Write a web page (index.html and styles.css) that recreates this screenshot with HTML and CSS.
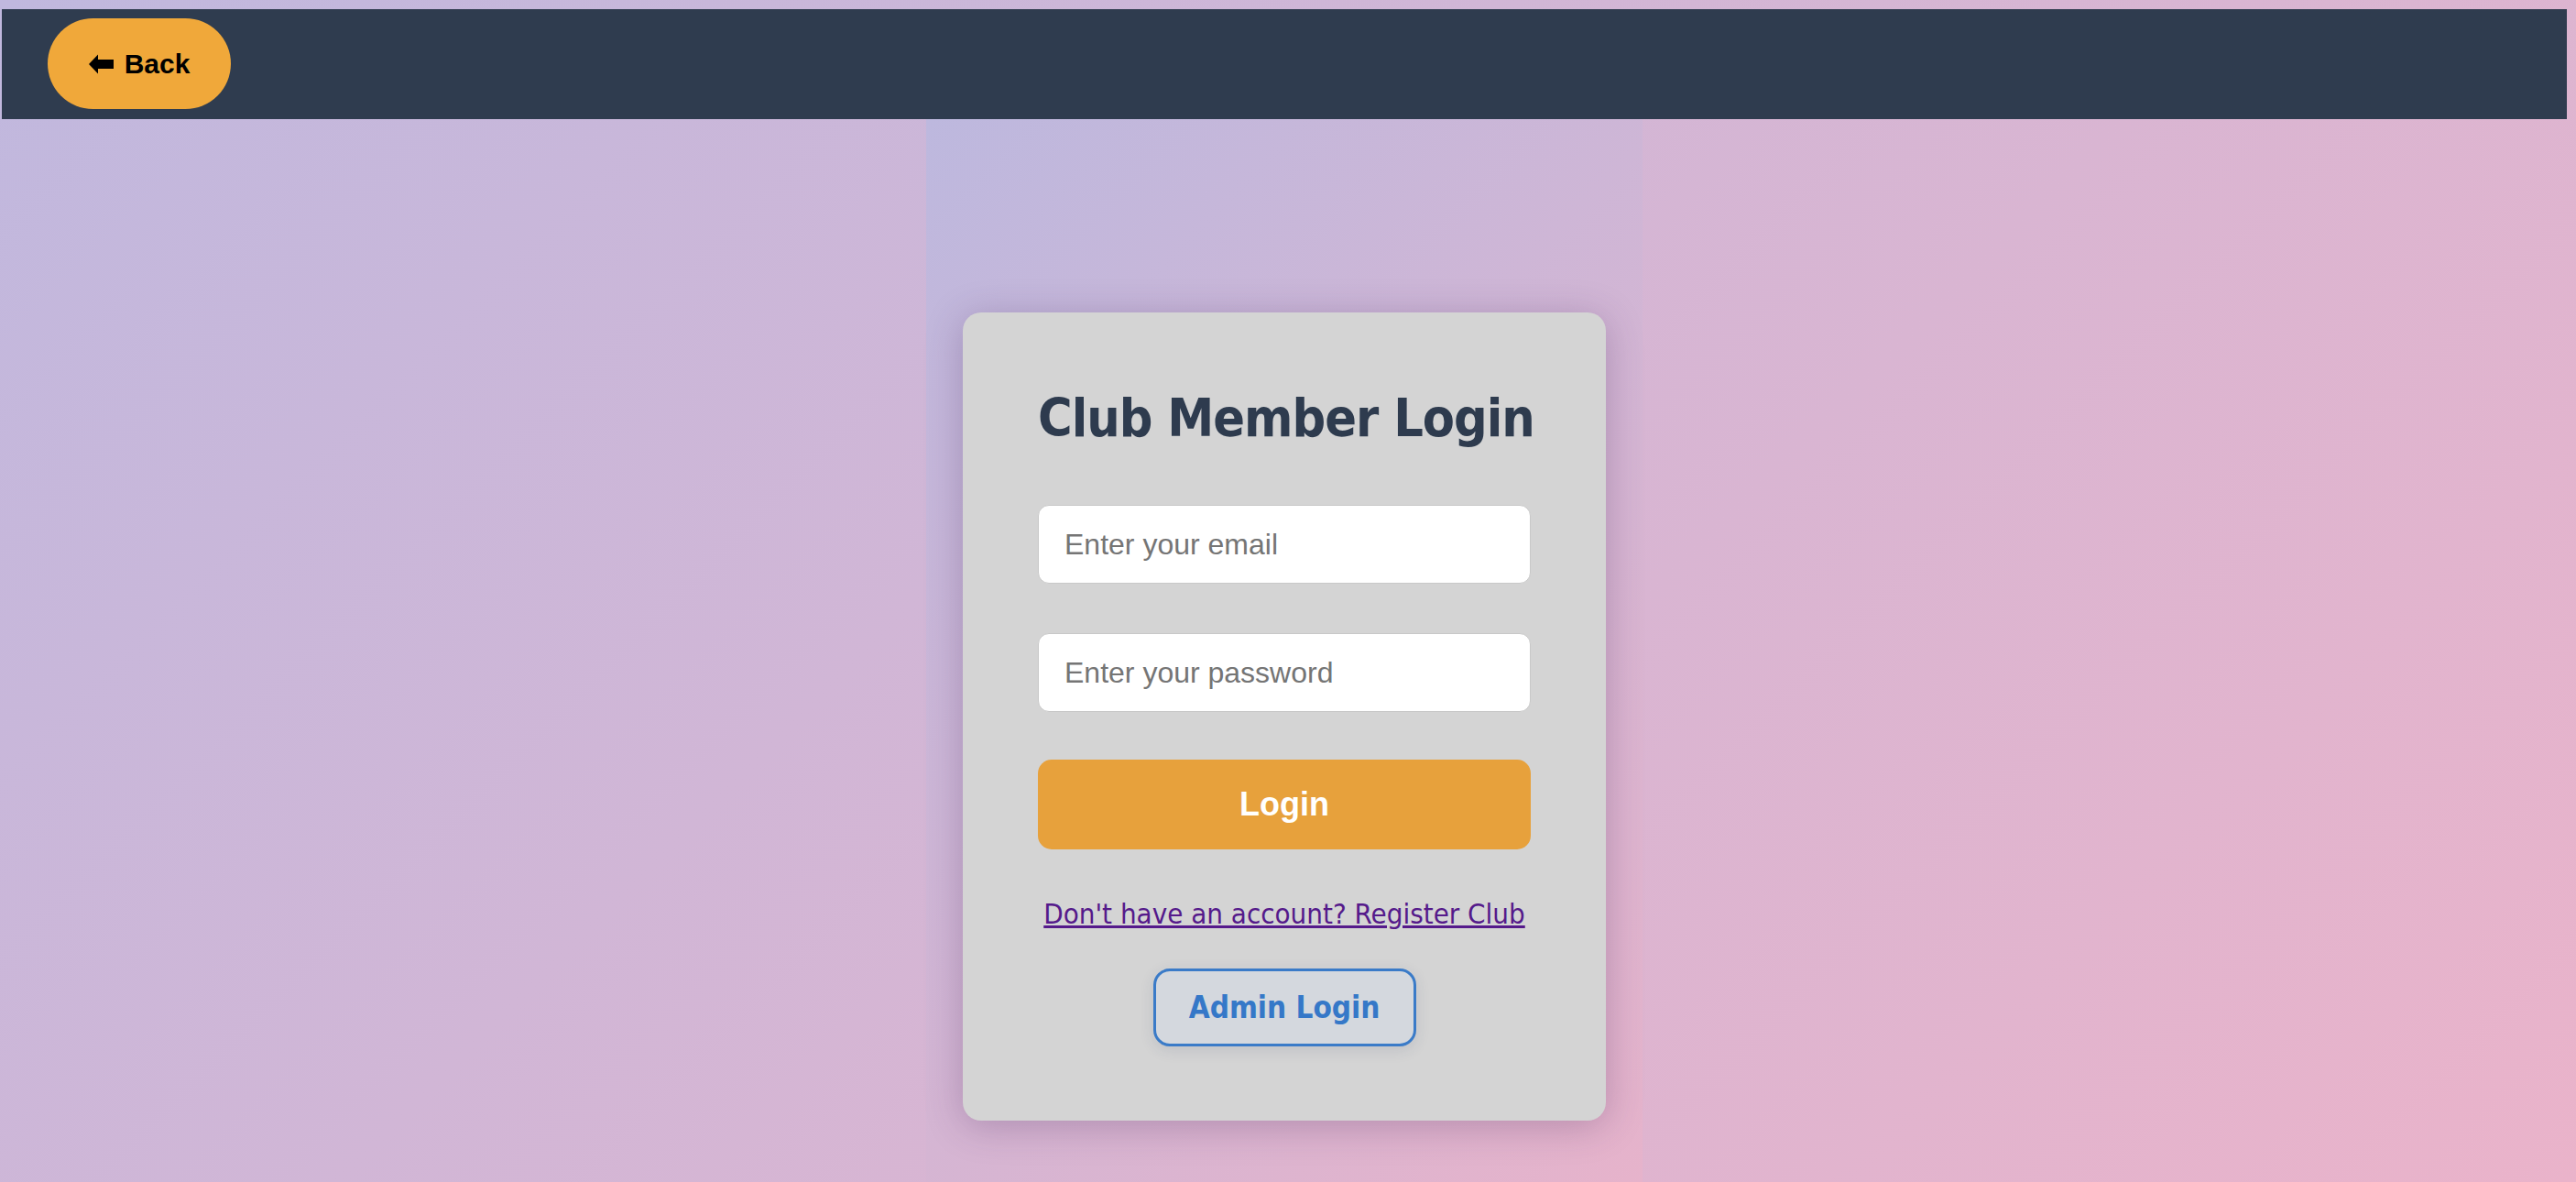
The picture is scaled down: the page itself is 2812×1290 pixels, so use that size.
FILE: index.html
```html
<!DOCTYPE html>
<html lang="en">
<head>
<meta charset="utf-8">
<title>Club Member Login</title>
<link rel="stylesheet" href="styles.css">
</head>
<body>
<div class="page">
  <nav class="topbar">
    <button class="back-btn" type="button">
      <svg class="back-icon" viewBox="0 0 27 22" width="27" height="22" aria-hidden="true"><polygon points="0,11 10,0.5 10,6 27,6 27,16 10,16 10,21.5" fill="#000"/></svg>
      <span>Back</span>
    </button>
  </nav>
  <main class="main">
    <div class="column">
      <section class="card">
        <h1 class="title">Club Member Login</h1>
        <form class="form">
          <input class="field" type="email" placeholder="Enter your email">
          <input class="field" type="password" placeholder="Enter your password">
          <button class="login-btn" type="button">Login</button>
        </form>
        <a class="register-link" href="#">Don't have an account? Register Club</a>
        <button class="admin-btn" type="button">Admin Login</button>
      </section>
    </div>
  </main>
</div>
</body>
</html>
```
FILE: styles.css
```css
html, body {
  margin: 0;
  padding: 0;
}
body {
  height: 100vh;
  overflow: hidden;
  background: linear-gradient(135deg, #c0b8de 0%, #eab3ca 100%);
  font-family: "Liberation Sans", Arial, sans-serif;
}
.page {
  margin: 0 10px 0 2px;
  padding-top: 10px;
  display: flex;
  flex-direction: column;
  height: 100vh;
  box-sizing: border-box;
}
.topbar {
  height: 120px;
  background: #2f3c4f;
  padding: 10px 0 0 50px;
  box-sizing: border-box;
  flex: none;
}
.back-btn {
  width: 200px;
  height: 99px;
  border: none;
  border-radius: 50px;
  background: #f0a83a;
  color: #000;
  font-family: "Liberation Sans", Arial, sans-serif;
  font-weight: bold;
  font-size: 30px;
  display: flex;
  align-items: center;
  justify-content: center;
  gap: 12px;
  padding: 0;
  cursor: pointer;
}
.back-icon {
  display: block;
}
.main {
  flex: 1;
  display: flex;
  justify-content: center;
}
.column {
  width: 782px;
  box-sizing: border-box;
  padding: 211px 40px 0;
  background: linear-gradient(135deg, #bdb8de 0%, #e6b3cb 100%);
}
.card {
  width: 702px;
  box-sizing: border-box;
  padding: 82px 82px 81px;
  background: #d4d4d4;
  border-radius: 20px;
  box-shadow: 0 6px 40px rgba(70, 40, 90, 0.28);
  display: flex;
  flex-direction: column;
  align-items: stretch;
}
.title {
  margin: 0;
  font-family: "DejaVu Sans Condensed", "DejaVu Sans", sans-serif;
  font-stretch: condensed;
  font-weight: bold;
  font-size: 57px;
  line-height: 66px;
  letter-spacing: -1px;
  color: #2e3b4e;
  text-align: center;
  white-space: nowrap;
}
.form {
  margin-top: 62px;
  display: flex;
  flex-direction: column;
}
.field {
  height: 86px;
  box-sizing: border-box;
  border: 1px solid #c8c8c8;
  border-radius: 12px;
  background: #fff;
  padding: 0 28px;
  font-family: "Liberation Sans", Arial, sans-serif;
  font-size: 32px;
  color: #333;
  outline: none;
}
.field + .field {
  margin-top: 54px;
}
.field::placeholder {
  color: #757575;
}
.login-btn {
  margin-top: 52px;
  height: 98px;
  border: none;
  border-radius: 15px;
  background: #e7a13c;
  color: #fff;
  font-family: "Liberation Sans", Arial, sans-serif;
  font-weight: bold;
  font-size: 36px;
  cursor: pointer;
}
.register-link {
  margin-top: 52px;
  align-self: center;
  font-family: "DejaVu Sans Condensed", "DejaVu Sans", sans-serif;
  font-stretch: condensed;
  font-size: 31px;
  line-height: 37px;
  color: #551a8b;
  text-decoration: underline;
  white-space: nowrap;
}
.admin-btn {
  margin-top: 41px;
  align-self: center;
  width: 287px;
  height: 85px;
  box-sizing: border-box;
  border: 3px solid #3a7bc8;
  border-radius: 18px;
  background: #d4d8de;
  color: #3578c8;
  font-family: "DejaVu Sans Condensed", "DejaVu Sans", sans-serif;
  font-stretch: condensed;
  font-weight: bold;
  font-size: 33px;
  padding: 0;
  box-shadow: 0 4px 16px rgba(40, 60, 100, 0.12);
  cursor: pointer;
}
```
